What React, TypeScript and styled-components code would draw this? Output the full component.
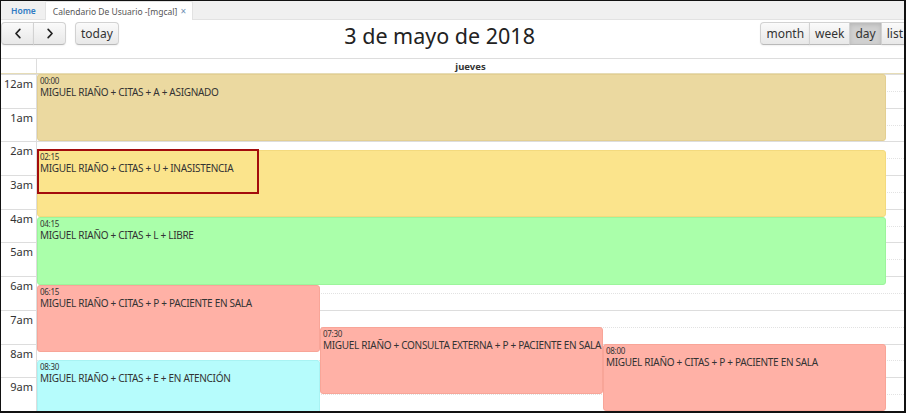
import { FC } from "react";
import styled, { createGlobalStyle, css } from "styled-components";

const HOUR = 33.7;
const PX_PER_MIN = HOUR / 60;
const SLOT = HOUR / 2;

type CalEvent = {
  start: number;
  end: number;
  title: string;
  color: string;
  border: string;
  col: number;
  cols: number;
};

const toMin = (t: string) => {
  const [h, m] = t.split(":").map(Number);
  return h * 60 + m;
};

const events: CalEvent[] = [
  { start: toMin("00:00"), end: toMin("02:00"), title: "MIGUEL RIAÑO + CITAS + A + ASIGNADO", color: "#ebd9a0", border: "#e3cf92", col: 0, cols: 1 },
  { start: toMin("02:15"), end: toMin("04:15"), title: "MIGUEL RIAÑO + CITAS + U + INASISTENCIA", color: "#fbe48c", border: "#f3da7e", col: 0, cols: 1 },
  { start: toMin("04:15"), end: toMin("06:15"), title: "MIGUEL RIAÑO + CITAS + L + LIBRE", color: "#aaffaa", border: "#9cf59c", col: 0, cols: 1 },
  { start: toMin("06:15"), end: toMin("08:15"), title: "MIGUEL RIAÑO + CITAS + P + PACIENTE EN SALA", color: "#ffb1a6", border: "#f8a598", col: 0, cols: 3 },
  { start: toMin("07:30"), end: toMin("09:30"), title: "MIGUEL RIAÑO + CONSULTA EXTERNA + P + PACIENTE EN SALA", color: "#ffb1a6", border: "#f8a598", col: 1, cols: 3 },
  { start: toMin("08:00"), end: toMin("10:00"), title: "MIGUEL RIAÑO + CITAS + P + PACIENTE EN SALA", color: "#ffb1a6", border: "#f8a598", col: 2, cols: 3 },
  { start: toMin("08:30"), end: toMin("10:30"), title: "MIGUEL RIAÑO + CITAS + E + EN ATENCIÓN", color: "#b6fcfc", border: "#a8f3f3", col: 0, cols: 3 },
];

const hours = ["12am", "1am", "2am", "3am", "4am", "5am", "6am", "7am", "8am", "9am", ""];

const pad = (n: number) => String(n).padStart(2, "0");
const fmt = (m: number) => `${pad(Math.floor(m / 60))}:${pad(m % 60)}`;

const App: FC = () => {
  return (
    <>
      <GlobalStyle />
      <Frame>
        <TabBar>
          <HomeTab>Home</HomeTab>
          <ActiveTab>
            Calendario De Usuario -[mgcal]
            <CloseMark>×</CloseMark>
          </ActiveTab>
        </TabBar>

        <Toolbar>
          <ToolbarSide>
            <ButtonGroup>
              <Button $first $icon aria-label="prev">
                <Chevron viewBox="0 0 10 14">
                  <path d="M7 2.5 L2.8 7 L7 11.5" />
                </Chevron>
              </Button>
              <Button $last $icon aria-label="next">
                <Chevron viewBox="0 0 10 14">
                  <path d="M3 2.5 L7.2 7 L3 11.5" />
                </Chevron>
              </Button>
            </ButtonGroup>
            <Button $first $last>today</Button>
          </ToolbarSide>
          <Title>3 de mayo de 2018</Title>
          <ToolbarRight>
            <ButtonGroup>
              <Button $first>month</Button>
              <Button>week</Button>
              <Button $active>day</Button>
              <Button $last>list</Button>
            </ButtonGroup>
          </ToolbarRight>
        </Toolbar>

        <HeaderRow>
          <AxisCorner />
          <DayName>jueves</DayName>
        </HeaderRow>

        <Body>
          <Axis>
            {hours.map((h, i) => (
              <AxisHour key={i}>
                <AxisLabel>{h}</AxisLabel>
                <AxisHalf />
              </AxisHour>
            ))}
          </Axis>
          <DayColumn>
            {hours.map((_, i) => (
              <HourRow key={i}>
                <HalfSlot />
                <HalfSlot $minor />
              </HourRow>
            ))}
            <EventLayer>
              {events.map((ev) => (
                <EventBox
                  key={ev.start + ev.title}
                  $bg={ev.color}
                  $border={ev.border}
                  style={{
                    top: ev.start * PX_PER_MIN,
                    height: (ev.end - ev.start) * PX_PER_MIN,
                    left: `${(ev.col / ev.cols) * 100}%`,
                    width: `${100 / ev.cols}%`,
                  }}
                >
                  <EventTime>{fmt(ev.start)}</EventTime>
                  <EventTitle>{ev.title}</EventTitle>
                </EventBox>
              ))}
              <Selection />
            </EventLayer>
          </DayColumn>
        </Body>
      </Frame>
    </>
  );
};

const GlobalStyle = createGlobalStyle`
  html, body {
    margin: 0;
    padding: 0;
    background: #fff;
  }
  body {
    font-family: "Noto Sans", "Open Sans", "DejaVu Sans", sans-serif;
    color: #333;
  }
  * {
    box-sizing: border-box;
  }
`;

const Frame = styled.div`
  width: 906px;
  height: 413px;
  overflow: hidden;
  border-top: 1px solid #111;
  border-left: 1px solid #111;
  border-right: 2px solid #111;
  border-bottom: 2px solid #111;
  background: #fff;
  display: flex;
  flex-direction: column;
`;

const TabBar = styled.div`
  height: 19px;
  flex: none;
  display: flex;
  align-items: flex-end;
  background: #f0f0f0;
  border-bottom: 1px solid #e2e2e2;
  padding-left: 1px;
`;

const HomeTab = styled.div`
  height: 18px;
  padding: 0 9px;
  display: flex;
  align-items: center;
  font-size: 8.5px;
  color: #2f7bc4;
  font-weight: 600;
`;

const ActiveTab = styled.div`
  height: 19px;
  margin-bottom: -1px;
  padding: 0 6px 0 7px;
  display: flex;
  align-items: center;
  gap: 3px;
  font-size: 8.5px;
  color: #555;
  background: #fff;
  border: 1px solid #e2e2e2;
  border-bottom: none;
  border-radius: 2px 2px 0 0;
`;

const CloseMark = styled.span`
  color: #6f8fb3;
  font-size: 10px;
  line-height: 1;
`;

const Toolbar = styled.div`
  height: 38px;
  flex: none;
  display: flex;
  align-items: flex-start;
  padding-top: 2px;
`;

const ToolbarSide = styled.div`
  display: flex;
  gap: 9px;
`;

const ToolbarRight = styled.div`
  display: flex;
  margin-right: -5px;
`;

const ButtonGroup = styled.div`
  display: flex;
`;

const Button = styled.button<{ $first?: boolean; $last?: boolean; $active?: boolean; $icon?: boolean }>`
  height: 23px;
  padding: 0 5px;
  margin: 0;
  margin-left: -1px;
  font-family: inherit;
  font-size: 12px;
  color: #333;
  display: flex;
  align-items: center;
  justify-content: center;
  background: linear-gradient(#fafafa, #e8e8e8);
  border: 1px solid #d2d2d2;
  border-bottom-color: #b9b9b9;
  border-radius: 0;
  box-shadow: inset 0 1px 0 rgba(255, 255, 255, 0.3), 0 1px 2px rgba(0, 0, 0, 0.06);
  ${(p) =>
    p.$first &&
    css`
      margin-left: 0;
      border-top-left-radius: 4px;
      border-bottom-left-radius: 4px;
    `}
  ${(p) =>
    p.$last &&
    css`
      border-top-right-radius: 4px;
      border-bottom-right-radius: 4px;
    `}
  ${(p) =>
    p.$active &&
    css`
      background: #d0d0d0;
      box-shadow: inset 0 2px 4px rgba(0, 0, 0, 0.12);
    `}
  ${(p) =>
    p.$icon &&
    css`
      width: 33px;
      padding: 0;
    `}
`;

const Chevron = styled.svg`
  width: 10px;
  height: 13px;
  fill: none;
  stroke: #222;
  stroke-width: 1.8;
  stroke-linecap: round;
  stroke-linejoin: round;
`;

const Title = styled.h2`
  flex: 1;
  margin: 0;
  text-align: center;
  font-size: 21.5px;
  font-weight: 400;
  line-height: 28px;
  color: #222;
`;

const HeaderRow = styled.div`
  height: 16px;
  flex: none;
  display: flex;
  border-top: 1px solid #ddd;
  border-bottom: 1px solid #e6dcb6;
`;

const AxisCorner = styled.div`
  width: 36px;
  border-right: 1px solid #ddd;
`;

const DayName = styled.div`
  flex: 1;
  text-align: center;
  font-size: 9.5px;
  font-weight: 700;
  line-height: 15px;
  color: #333;
`;

const Body = styled.div`
  flex: 1;
  display: flex;
  overflow: hidden;
`;

const Axis = styled.div`
  width: 36px;
  flex: none;
  border-right: 1px solid #ddd;
`;

const AxisHour = styled.div`
  height: ${HOUR}px;
  display: flex;
  flex-direction: column;
`;

const AxisLabel = styled.div`
  height: ${SLOT}px;
  border-top: 1px solid #ddd;
  text-align: right;
  padding-right: 3px;
  font-size: 11px;
  line-height: ${SLOT + 1}px;
  color: #333;
`;

const AxisHalf = styled.div`
  height: ${SLOT}px;
`;

const DayColumn = styled.div`
  flex: 1;
  position: relative;
`;

const HourRow = styled.div`
  height: ${HOUR}px;
  display: flex;
  flex-direction: column;
`;

const HalfSlot = styled.div<{ $minor?: boolean }>`
  height: ${SLOT}px;
  border-top: 1px ${(p) => (p.$minor ? "dotted #e2e2e2" : "solid #ddd")};
`;

const EventLayer = styled.div`
  position: absolute;
  top: 0;
  left: 0;
  width: 849px;
  bottom: 0;
`;

const EventBox = styled.div<{ $bg: string; $border: string }>`
  position: absolute;
  overflow: hidden;
  padding: 1px 2px;
  background: ${(p) => p.$bg};
  border: 1px solid ${(p) => p.$border};
  border-radius: 3px;
  color: #333;
`;

const EventTime = styled.div`
  font-size: 8px;
  line-height: 9px;
  letter-spacing: -0.3px;
`;

const EventTitle = styled.div`
  font-size: 10px;
  line-height: 15px;
  letter-spacing: -0.3px;
  white-space: nowrap;
`;

const Selection = styled.div`
  position: absolute;
  top: ${Math.round(toMin("02:15") * PX_PER_MIN) - 1}px;
  left: 0;
  width: 222px;
  height: 45px;
  border: 2px solid #a30c0c;
  pointer-events: none;
`;

export default App;
